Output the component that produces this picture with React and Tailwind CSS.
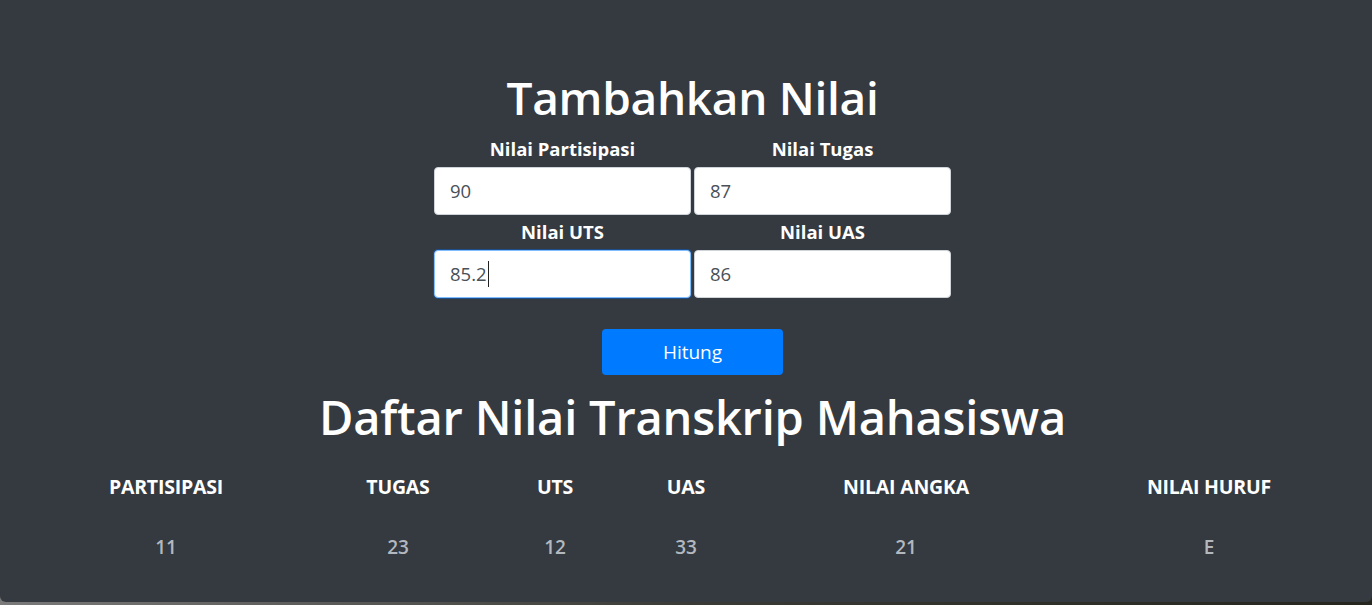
const fields = [
  [
    { label: 'Nilai Partisipasi', value: '90' },
    { label: 'Nilai Tugas', value: '87' },
  ],
  [
    { label: 'Nilai UTS', value: '85.2', focused: true },
    { label: 'Nilai UAS', value: '86' },
  ],
];

const columns = [
  { key: 'partisipasi', header: 'PARTISIPASI' },
  { key: 'tugas', header: 'TUGAS' },
  { key: 'uts', header: 'UTS' },
  { key: 'uas', header: 'UAS' },
  { key: 'angka', header: 'NILAI ANGKA' },
  { key: 'huruf', header: 'NILAI HURUF' },
];

const rows = [{ id: 1, partisipasi: 11, tugas: 23, uts: 12, uas: 33, angka: 21, huruf: 'E' }];

function Field({ label, value, focused }) {
  return (
    <div className="flex flex-col items-center w-[257px]">
      <label className="text-[18.5px] font-bold text-white leading-[28px] mb-[4px]">{label}</label>
      <div
        className={`w-full h-[48px] bg-white rounded-[4px] px-[15px] flex items-center text-[18.5px] text-[#495057] border ${
          focused ? 'border-[#80bdff] shadow-[0_0_0_1px_#1d4e89]' : 'border-[#ced4da]'
        }`}
      >
        <span>{value}</span>
        {focused && <span className="w-px h-[26px] bg-[#222] ml-px"></span>}
      </div>
    </div>
  );
}

export default function App() {
  return (
    <div className="w-[1372px] h-[605px] overflow-hidden bg-gradient-to-r from-[#7a7a7a] via-[#3a3a36] to-[#26261f] font-['Open_Sans',sans-serif]">
      <div className="h-[602px] bg-[#343a40] rounded-b-[6px] flex flex-col items-center pt-[62px]">
        <div className="flex flex-col items-center ml-[13px]">
          <h1 className="text-[46px] font-semibold text-white leading-[70px] tracking-[-0.3px]">Tambahkan Nilai</h1>
          <div className="flex flex-col gap-[3px] mt-[3px]">
            {fields.map((row, i) => (
              <div key={i} className="flex gap-[3px]">
                {row.map((f) => (
                  <Field key={f.label} {...f} />
                ))}
              </div>
            ))}
          </div>
          <button className="mt-[31px] w-[181px] h-[46px] bg-[#007bff] rounded-[4px] text-white text-[19px]">Hitung</button>
          <h2 className="text-[47px] font-semibold text-white leading-[70px] mt-[7px] tracking-[-0.2px]">Daftar Nilai Transkrip Mahasiswa</h2>
        </div>
        <div className="w-full pl-[40px] mt-[5px]">
          <div className="grid grid-cols-[252px_212px_102px_160px_280px_326px] h-[60px] items-center">
            {columns.map((c) => (
              <div key={c.key} className="text-center text-[19.5px] font-bold text-white tracking-[-0.2px]">
                {c.header}
              </div>
            ))}
          </div>
          {rows.map((r) => (
            <div key={r.id} className="grid grid-cols-[252px_212px_102px_160px_280px_326px] h-[60px] items-center">
              {columns.map((c) => (
                <div key={c.key} className="text-center text-[19px] font-semibold text-[#b3b8bf]">
                  {r[c.key]}
                </div>
              ))}
            </div>
          ))}
        </div>
      </div>
    </div>
  );
}
